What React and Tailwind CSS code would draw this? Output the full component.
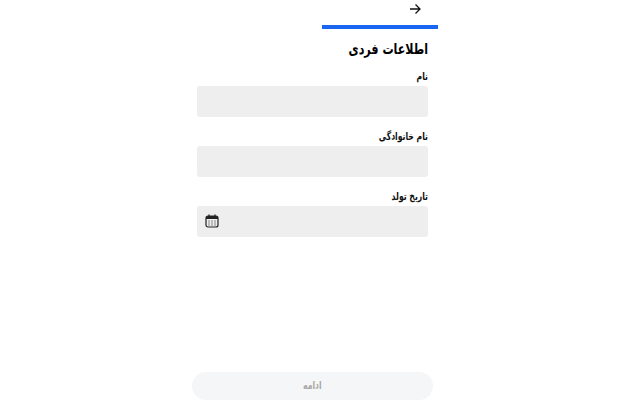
import React from "react";

function Field({ label, children }) {
  return (
    <div className="flex flex-col">
      <label className="h-[20px] origin-right scale-x-[0.7] text-[11px] leading-[21px] font-bold text-[#111]">{label}</label>
      <div className="flex h-[31px] items-center rounded-[3px] bg-[#eeeeee] pb-[2px] pl-[8px]" dir="ltr">
        {children}
      </div>
    </div>
  );
}

function Calendar() {
  return (
    <svg width="14" height="14" viewBox="0 0 14 14" fill="none" className="text-[#222]">
      <rect x="1" y="2" width="12" height="11" rx="2" stroke="currentColor" strokeWidth="1.2" />
      <path d="M1 5h12V4a2 2 0 0 0-2-2H3a2 2 0 0 0-2 2z" fill="currentColor" />
      <path d="M4 .8v2.4M10 .8v2.4" stroke="currentColor" strokeWidth="1.2" strokeLinecap="round" />
      <path d="M3.5 7h1M6.5 7h1M9.5 7h1M3.5 9h1M6.5 9h1M9.5 9h1M3.5 11h1M6.5 11h1M9.5 11h1" stroke="currentColor" strokeWidth="1" />
    </svg>
  );
}

export default function App() {
  return (
    <div dir="rtl" className="flex h-[416px] w-[624px] justify-center overflow-hidden bg-white font-['DejaVu_Sans',sans-serif]">
      <div className="flex w-[251px] flex-col">
        <div className="flex h-[25px] items-start pr-[17px] pt-[3px]">
          <svg width="12" height="12" viewBox="0 0 12 12" fill="none" stroke="#111" strokeWidth="1.3">
            <path d="M1 6h10M6.5 1.5 11 6l-4.5 4.5" />
          </svg>
        </div>
        <div className="h-[4px] w-[116px] bg-[#1a66f0]" />
        <div className="flex flex-1 flex-col px-[10px]">
          <h1 className="mt-[10px] h-[20px] origin-right scale-x-[0.74] text-[15px] leading-[20px] font-bold text-black">اطلاعات فردی</h1>
          <div className="mt-[7px] flex flex-col gap-[9px]">
            <Field label="نام" />
            <Field label="نام خانوادگی" />
            <Field label="تاریخ تولد"><Calendar /></Field>
          </div>
        </div>
        <div className="mb-[16px] px-[5px]">
          <button className="h-[28px] w-full rounded-full bg-[#f5f6f7] text-[11px] font-bold text-[#a9a9a9]"><span className="inline-block scale-x-[0.7]">ادامه</span></button>
        </div>
      </div>
    </div>
  );
}
